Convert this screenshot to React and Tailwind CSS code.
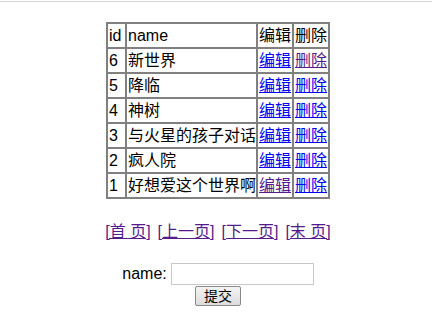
import React from 'react';

const rows = [
  { id: 6, name: '新世界', editVisited: false, delVisited: true },
  { id: 5, name: '降临' },
  { id: 4, name: '神树' },
  { id: 3, name: '与火星的孩子对话' },
  { id: 2, name: '疯人院' },
  { id: 1, name: '好想爱这个世界啊', editVisited: true },
];

const font = { fontFamily: '"Liberation Sans", "Noto Sans CJK SC", sans-serif' };

export default function App() {
  return (
    <div className="min-h-[336px] bg-white text-black text-[16px]" style={font}>
      <div className="h-[2px] border-b border-gray-300" />

      <table className="ml-[106px] mt-[20px] w-[224px] table-fixed border-separate border-spacing-0 border border-[#808080]">
        <colgroup>
          <col className="w-[19px]" />
          <col className="w-[131px]" />
          <col className="w-[36px]" />
          <col className="w-[36px]" />
        </colgroup>
        <thead>
          <tr>
            <th className="border border-[#808080] px-px text-left font-normal leading-[23px]">id</th>
            <th className="border border-[#808080] px-px text-left font-normal leading-[23px]">name</th>
            <th className="border border-[#808080] px-px text-left font-normal leading-[23px]">编辑</th>
            <th className="border border-[#808080] px-px text-left font-normal leading-[23px]">删除</th>
          </tr>
        </thead>
        <tbody>
          {rows.map((r) => (
            <tr key={r.id}>
              <td className="border border-[#808080] px-px leading-[23px]">{r.id}</td>
              <td className="border border-[#808080] px-px leading-[23px] whitespace-nowrap">{r.name}</td>
              <td className="border border-[#808080] px-px leading-[23px]">
                <a href="#" className={r.editVisited ? 'text-[#551a8b] underline' : 'text-[#0000ee] underline'}>编辑</a>
              </td>
              <td className="border border-[#808080] px-px leading-[23px]">
                <a href="#" className={r.delVisited ? 'text-[#551a8b] underline' : 'text-[#0000ee] underline'}>删除</a>
              </td>
            </tr>
          ))}
        </tbody>
      </table>

      <div className="mt-[22px] flex justify-center gap-[7px] pl-[4px] leading-[22px]">
        <a href="#" className="text-[#551a8b] underline">[首 页]</a>
        <a href="#" className="text-[#551a8b] underline">[上一页]</a>
        <a href="#" className="text-[#551a8b] underline">[下一页]</a>
        <a href="#" className="text-[#551a8b] underline">[末 页]</a>
      </div>

      <div className="mt-[20px] flex flex-col items-center pl-[4px]">
        <div className="flex items-center gap-[4px]">
          <span className="leading-[20px]">name:</span>
          <input type="text" className="h-[22px] w-[143px] border border-[#c8c8c8] bg-white outline-none" />
        </div>
        <button className="mt-px h-[20px] w-[46px] rounded-[2px] border border-[#8a8a8a] bg-gradient-to-b from-[#f4f4f4] to-[#dcdcdc] text-[14px] leading-[16px]">
          提交
        </button>
      </div>
    </div>
  );
}
